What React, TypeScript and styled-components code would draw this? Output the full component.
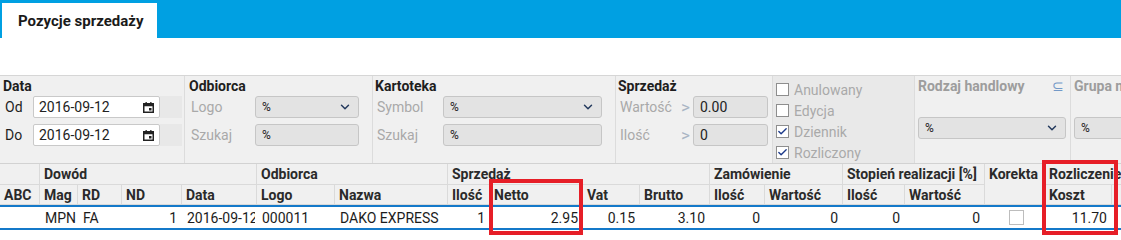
import { Check, ChevronDown } from 'lucide-react';
import styled, { createGlobalStyle } from 'styled-components';

const GlobalStyle = createGlobalStyle`
  html, body {
    margin: 0;
    padding: 0;
    background: #fff;
  }
  body {
    font-family: Roboto, 'Liberation Sans', Arial, sans-serif;
    font-size: 14px;
    color: #222;
    overflow: hidden;
  }
  * {
    box-sizing: border-box;
  }
`;

const Page = styled.div`
  width: 1121px;
  height: 240px;
  overflow: hidden;
`;

// Tab bar
const TabBar = styled.div`
  height: 38px;
  background: #00a0e2;
  padding: 3px 0 0 2px;
  display: flex;
`;

const Tab = styled.div`
  width: 155px;
  height: 35px;
  background: #fff;
  color: #1a1a1a;
  font-size: 15px;
  font-weight: 700;
  padding-left: 16px;
  display: flex;
  align-items: center;
`;

// Filter panel
const Panel = styled.div`
  margin-top: 37px;
  height: 88px;
  background: #f0f0f0;
  border-top: 1px solid #d6d6d6;
  display: flex;
  overflow: hidden;
`;

const Section = styled.div<{ $width?: number; $shade?: boolean; $pad?: number }>`
  flex: ${({ $width }) => ($width ? `0 0 ${$width}px` : '1 1 auto')};
  border-left: 1px solid #dcdcdc;
  padding-left: ${({ $pad }) => $pad ?? 3}px;
  background: ${({ $shade }) => ($shade ? '#e9e9e9' : 'transparent')};
  display: flex;
  flex-direction: column;
  white-space: nowrap;
  overflow: hidden;

  &:first-child {
    border-left: none;
  }
`;

const SectionTitle = styled.div<{ $muted?: boolean }>`
  height: 20px;
  line-height: 20px;
  font-weight: 700;
  color: ${({ $muted }) => ($muted ? '#9d9d9d' : '#1e1e1e')};
  display: flex;
  align-items: center;
`;

const SubsetIcon = styled.span`
  margin-left: auto;
  margin-right: 6px;
  color: #7399c8;
  font-size: 14px;
  font-weight: 400;
`;

const Fields = styled.div<{ $top?: number }>`
  display: flex;
  flex-direction: column;
  gap: 6px;
  margin-top: ${({ $top }) => $top ?? 0}px;
`;

const FieldRow = styled.div`
  height: 22px;
  display: flex;
  align-items: center;
`;

const FieldLabel = styled.span<{ $width: number; $muted?: boolean }>`
  flex: 0 0 ${({ $width }) => $width}px;
  padding-left: 2px;
  color: ${({ $muted }) => ($muted ? '#a9a9a9' : '#1e1e1e')};
`;

const Gt = styled.span`
  flex: 0 0 12px;
  color: #a9b5c4;
  font-size: 17px;
  line-height: 1;
`;

const DateBox = styled.div`
  width: 127px;
  height: 22px;
  background: #fff;
  border: 1px solid #c9c9c9;
  border-radius: 2px;
  padding: 0 5px;
  display: flex;
  align-items: center;
  justify-content: space-between;
  color: #222;
`;

const DateFiller = styled.div`
  width: 22px;
  height: 22px;
  background: #e8e8e8;
`;

const GrayBox = styled.div<{ $width: number }>`
  width: ${({ $width }) => $width}px;
  height: 22px;
  flex: 0 0 auto;
  background: #e3e3e3;
  border: 1px solid #c6c6c6;
  border-radius: 3px;
  padding: 0 6px;
  display: flex;
  align-items: center;
  justify-content: space-between;
  font-size: 12px;
  color: #222;
`;

const NumberBox = styled(GrayBox)`
  font-size: 14px;
  padding-left: 6px;
`;

const CheckList = styled.div`
  padding-top: 3px;
  display: flex;
  flex-direction: column;
`;

const CheckRow = styled.label`
  height: 21px;
  display: flex;
  align-items: center;
  gap: 5px;
  color: #a9a9a9;
`;

const Box = styled.span<{ $size?: number; $border?: string }>`
  width: ${({ $size }) => $size ?? 13}px;
  height: ${({ $size }) => $size ?? 13}px;
  border: 1px solid ${({ $border }) => $border ?? '#8e8e8e'};
  background: #fff;
  display: inline-flex;
  align-items: center;
  justify-content: center;
  color: #1d3a8a;
`;

const CalendarIcon = () => (
  <svg width="11" height="11" viewBox="0 0 11 11">
    <rect x="0.75" y="1.75" width="9.5" height="8.5" fill="none" stroke="#222" strokeWidth="1.5" />
    <rect x="0.75" y="1.75" width="9.5" height="2.5" fill="#222" />
    <rect x="2.5" y="0" width="1.3" height="2" fill="#222" />
    <rect x="7.2" y="0" width="1.3" height="2" fill="#222" />
    <rect x="6" y="6" width="2.5" height="2.5" fill="#222" />
  </svg>
);

// Grid (table)
const COLS = [40, 38, 44, 60, 75, 78, 113, 42, 93, 57, 70, 55, 78, 62, 80, 60, 67, 80];
const template = COLS.map((w) => `${w}px`).join(' ');

const GridArea = styled.div`
  position: relative;
  width: 1192px;
`;

const HeadGrid = styled.div`
  display: grid;
  grid-template-columns: ${template};
  grid-template-rows: 21px 20px;
  border-top: 1px solid #d2d2d2;
  background: #f0f0f0;
`;

const HeadCell = styled.div<{ $span?: number; $rows?: number; $top?: boolean }>`
  grid-column: span ${({ $span }) => $span ?? 1};
  grid-row: span ${({ $rows }) => $rows ?? 1};
  border-right: 1px solid #dadada;
  border-bottom: 1px solid #dadada;
  padding: ${({ $top }) => ($top ? '2px 4px 0' : '0 4px')};
  display: flex;
  align-items: ${({ $top }) => ($top ? 'flex-start' : 'center')};
  font-weight: 700;
  color: #2a2a2a;
  white-space: nowrap;
  overflow: hidden;
`;

const DataGrid = styled.div`
  display: grid;
  grid-template-columns: ${template};
  height: 25px;
  border-top: 2px solid #1479c9;
  border-bottom: 2px solid #1479c9;
  background: #fff;
`;

const DataCell = styled.div<{ $align?: 'left' | 'right' | 'center' }>`
  padding: 0 ${({ $align }) => ($align === 'right' ? 5 : 2)}px 0 5px;
  display: flex;
  align-items: center;
  justify-content: ${({ $align }) =>
    $align === 'right' ? 'flex-end' : $align === 'center' ? 'center' : 'flex-start'};
  min-width: 0;
  color: #1c1c1c;
`;

const CellText = styled.span`
  display: block;
  white-space: nowrap;
  overflow: hidden;
`;

const Highlight = styled.div`
  position: absolute;
  border: 4px solid #e61e27;
  pointer-events: none;
`;

const groups: { label: string; span: number; rows?: number }[] = [
  { label: '', span: 1 },
  { label: 'Dowód', span: 4 },
  { label: 'Odbiorca', span: 2 },
  { label: 'Sprzedaż', span: 4 },
  { label: 'Zamówienie', span: 2 },
  { label: 'Stopień realizacji [%]', span: 2 },
  { label: 'Korekta', span: 1, rows: 2 },
  { label: 'Rozliczenie', span: 2 },
];

const columns = [
  'ABC', 'Mag', 'RD', 'ND', 'Data', 'Logo', 'Nazwa', 'Ilość', 'Netto', 'Vat', 'Brutto',
  'Ilość', 'Wartość', 'Ilość', 'Wartość', 'Koszt', '',
];

type Cell = { value: string; align?: 'left' | 'right' | 'center'; check?: boolean };

const row: Cell[] = [
  { value: '' },
  { value: 'MPN' },
  { value: 'FA' },
  { value: '1', align: 'right' },
  { value: '2016-09-12' },
  { value: '000011' },
  { value: 'DAKO EXPRESS' },
  { value: '1', align: 'right' },
  { value: '2.95', align: 'right' },
  { value: '0.15', align: 'right' },
  { value: '3.10', align: 'right' },
  { value: '0', align: 'right' },
  { value: '0', align: 'right' },
  { value: '0', align: 'right' },
  { value: '0', align: 'right' },
  { value: '', align: 'center', check: true },
  { value: '11.70', align: 'right' },
  { value: '' },
];

const checks = [
  { label: 'Anulowany', checked: false },
  { label: 'Edycja', checked: false },
  { label: 'Dziennik', checked: true },
  { label: 'Rozliczony', checked: true },
];

export default function App() {
  return (
    <Page>
      <GlobalStyle />
      <TabBar>
        <Tab>Pozycje sprzedaży</Tab>
      </TabBar>

      <Panel>
        <Section $width={184}>
          <SectionTitle>Data</SectionTitle>
          <Fields>
            {['Od', 'Do'].map((l) => (
              <FieldRow key={l}>
                <FieldLabel $width={30}>{l}</FieldLabel>
                <DateBox>
                  2016-09-12
                  <CalendarIcon />
                </DateBox>
                <DateFiller />
              </FieldRow>
            ))}
          </Fields>
        </Section>

        <Section $width={188} $pad={4}>
          <SectionTitle>Odbiorca</SectionTitle>
          <Fields>
            <FieldRow>
              <FieldLabel $width={66} $muted>Logo</FieldLabel>
              <GrayBox $width={104}>
                %
                <ChevronDown size={14} color="#23395d" strokeWidth={2.5} />
              </GrayBox>
            </FieldRow>
            <FieldRow>
              <FieldLabel $width={66} $muted>Szukaj</FieldLabel>
              <GrayBox $width={104}>%</GrayBox>
            </FieldRow>
          </Fields>
        </Section>

        <Section $width={243} $pad={2}>
          <SectionTitle>Kartoteka</SectionTitle>
          <Fields>
            <FieldRow>
              <FieldLabel $width={68} $muted>Symbol</FieldLabel>
              <GrayBox $width={159}>
                %
                <ChevronDown size={14} color="#23395d" strokeWidth={2.5} />
              </GrayBox>
            </FieldRow>
            <FieldRow>
              <FieldLabel $width={68} $muted>Szukaj</FieldLabel>
              <GrayBox $width={159}>%</GrayBox>
            </FieldRow>
          </Fields>
        </Section>

        <Section $width={157} $pad={2}>
          <SectionTitle>Sprzedaż</SectionTitle>
          <Fields>
            <FieldRow>
              <FieldLabel $width={63} $muted>Wartość</FieldLabel>
              <Gt>&gt;</Gt>
              <NumberBox $width={75}>0.00</NumberBox>
            </FieldRow>
            <FieldRow>
              <FieldLabel $width={63} $muted>Ilość</FieldLabel>
              <Gt>&gt;</Gt>
              <NumberBox $width={75}>0</NumberBox>
            </FieldRow>
          </Fields>
        </Section>

        <Section $width={142} $shade>
          <CheckList>
            {checks.map((c) => (
              <CheckRow key={c.label}>
                <Box>{c.checked && <Check size={11} strokeWidth={3} />}</Box>
                {c.label}
              </CheckRow>
            ))}
          </CheckList>
        </Section>

        <Section $width={156}>
          <SectionTitle $muted>
            Rodzaj handlowy
            <SubsetIcon>⊆</SubsetIcon>
          </SectionTitle>
          <Fields $top={21}>
            <GrayBox $width={148}>
              %
              <ChevronDown size={14} color="#23395d" strokeWidth={2.5} />
            </GrayBox>
          </Fields>
        </Section>

        <Section $pad={3}>
          <SectionTitle $muted>Grupa magazynowa</SectionTitle>
          <Fields $top={21}>
            <GrayBox $width={148}>%</GrayBox>
          </Fields>
        </Section>
      </Panel>

      <GridArea>
        <HeadGrid>
          {groups.map((g, i) => (
            <HeadCell key={`g${i}`} $span={g.span} $rows={g.rows} $top={!!g.rows}>
              {g.label}
            </HeadCell>
          ))}
          {columns.map((c, i) => (
            <HeadCell key={`c${i}`}>{c}</HeadCell>
          ))}
        </HeadGrid>
        <DataGrid>
          {row.map((c, i) => (
            <DataCell key={i} $align={c.align}>
              {c.check ? <Box $size={15} $border="#bdbdbd" /> : <CellText>{c.value}</CellText>}
            </DataCell>
          ))}
        </DataGrid>

        <Highlight style={{ left: 489, top: 16, width: 94, height: 56 }} />
        <Highlight style={{ left: 1042, top: -3, width: 76, height: 75 }} />
      </GridArea>
    </Page>
  );
}
